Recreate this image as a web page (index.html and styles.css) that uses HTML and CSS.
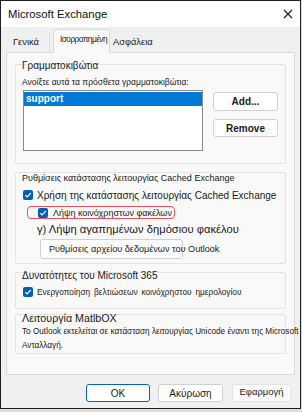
FILE: index.html
```html
<!DOCTYPE html>
<html lang="el">
<head>
<meta charset="utf-8">
<title>Microsoft Exchange</title>
<link rel="stylesheet" href="styles.css">
</head>
<body>
<div class="window">
  <div class="titlebar">
    <span class="title">Microsoft Exchange</span>
    <svg class="close" viewBox="0 0 10 10" width="10" height="10"><path d="M1 1 L9 9 M9 1 L1 9" stroke="#1a1a1a" stroke-width="1.1" fill="none"/></svg>
  </div>
  <div class="body">
    <div class="tabs">
      <div class="tab t1">Γενικά</div>
      <div class="tab active">Ισορροπημένη</div>
      <div class="tab t3">Ασφάλεια</div>
    </div>
    <div class="panel">
      <div class="group g1">
        <div class="legend">Γραμματοκιβώτια</div>
        <div class="hint">Ανοίξτε αυτά τα πρόσθετα γραμματοκιβώτια:</div>
        <div class="mailbox-row">
          <div class="listbox"><div class="item selected">support</div></div>
          <div class="side-buttons">
            <button class="btn add">Add...</button>
            <button class="btn remove">Remove</button>
          </div>
        </div>
      </div>
      <div class="group g2">
        <div class="legend">Ρυθμίσεις κατάστασης λειτουργίας Cached Exchange</div>
        <div class="check-row first">
          <svg class="cb" viewBox="0 0 10 10"><rect x="0" y="0" width="10" height="10" rx="2" fill="#005fb8"/><path d="M2.3 5.2 L4.2 7 L7.8 3" stroke="#fff" stroke-width="1.2" fill="none"/></svg>
          <span>Χρήση της κατάστασης λειτουργίας Cached Exchange</span>
        </div>
        <div class="highlight">
          <svg class="cb" viewBox="0 0 10 10"><rect x="0" y="0" width="10" height="10" rx="2" fill="#005fb8"/><path d="M2.3 5.2 L4.2 7 L7.8 3" stroke="#fff" stroke-width="1.2" fill="none"/></svg>
          <span>Λήψη κοινόχρηστων φακέλων</span>
        </div>
        <div class="big-line">γ) Λήψη αγαπημένων δημόσιου φακέλου</div>
        <button class="btn datafile">Ρυθμίσεις αρχείου δεδομένων του Outlook</button>
      </div>
      <div class="group g3">
        <div class="legend">Δυνατότητες του Microsoft 365</div>
        <div class="check-row">
          <svg class="cb" viewBox="0 0 10 10"><rect x="0" y="0" width="10" height="10" rx="2" fill="#005fb8"/><path d="M2.3 5.2 L4.2 7 L7.8 3" stroke="#fff" stroke-width="1.2" fill="none"/></svg>
          <span class="small">Ενεργοποίηση βελτιώσεων κοινόχρηστου ημερολογίου</span>
        </div>
      </div>
      <div class="group g4">
        <div class="legend">Λειτουργία MatlbOX</div>
        <div class="para">Το Outlook εκτελείται σε κατάσταση λειτουργίας Unicode έναντι της Microsoft<br>Ανταλλαγή.</div>
      </div>
    </div>
    <div class="footer">
      <button class="btn ok">OK</button>
      <button class="btn cancel">Ακύρωση</button>
      <button class="btn apply">Εφαρμογή</button>
    </div>
  </div>
</div>
</body>
</html>
```
FILE: styles.css
```css
* { box-sizing: border-box; margin: 0; padding: 0; }
html, body { background: #dcdcdc; }
body { margin: 0; font-family: "Liberation Sans", Arial, sans-serif; font-size: 10px; color: #1a1a1a; }

.window { width: 301px; height: 409px; border: 1px solid #202020; background: #f0f0f0; display: flex; flex-direction: column; overflow: hidden; }

.titlebar { height: 26px; flex: none; background: #ffffff; display: flex; align-items: center; justify-content: space-between; padding: 0 7px 0 7px; }
.title { font-size: 11.3px; color: #111; }
.close { width: 10px; height: 10px; }

.body { flex: 1; display: flex; flex-direction: column; padding: 3px 5px 6px 5px; }

.tabs { display: flex; align-items: flex-end; height: 23px; padding-left: 2px; margin-bottom: -1px; position: relative; z-index: 1; }
.tab { height: 20px; line-height: 19px; padding-left: 5px; font-size: 9.3px; color: #1a1a1a; white-space: nowrap; }
.t1 { width: 42px; border-right: 1px solid #e2e2e2; }
.tab.active { width: 57px; height: 24px; margin-left: 3px; line-height: 19px; padding-left: 6px; font-size: 8.3px; letter-spacing: -0.55px; background: #f9f9f9; border: 1px solid #d9d9d9; border-bottom: none; border-radius: 3px 3px 0 0; }
.t3 { width: 44px; padding-left: 3px; }

.panel { flex: 1; background: #f9f9f9; border: 1px solid #dadada; padding: 11px 8px 0 8px; display: flex; flex-direction: column; }

.group { border: 1px solid #e3e3e3; border-radius: 2px; padding: 0 7px 0 6px; }
.legend { line-height: 12px; margin-top: -3px; white-space: nowrap; }
.g1 { padding-bottom: 12px; }
.g1 .legend { margin-top: -5px; }
.g2 { margin-top: 8px; padding-bottom: 4px; }
.g2 .legend { margin-top: -1px; font-size: 9px; }
.g3 { margin-top: 8px; padding-bottom: 10px; }
.g3 .legend { font-size: 10px; }
.g4 { margin-top: 5px; }
.g4 .legend { font-size: 10.7px; }

.hint { line-height: 12px; margin-top: 4px; font-size: 8.5px; white-space: nowrap; }
.mailbox-row { display: flex; gap: 10px; margin-top: 2px; margin-left: 1px; }
.listbox { width: 180px; height: 61px; background: #ffffff; border: 1px solid #8a8a8a; padding: 1px 0 0 0; }
.item { height: 14px; line-height: 14px; padding-left: 2px; font-weight: bold; font-size: 10px; }
.item.selected { background: #0078d7; color: #ffffff; }
.side-buttons { width: 65px; display: flex; flex-direction: column; margin-top: 2px; }

.btn { font-family: inherit; font-size: 10px; color: #1a1a1a; background: #ffffff; border: 1px solid #d0d0d0; border-radius: 3px; cursor: default; }
.add { height: 19px; font-weight: bold; }
.remove { height: 18px; margin-top: 8px; font-weight: bold; }

.check-row { display: flex; align-items: center; gap: 4px; height: 12px; margin-top: 4px; margin-left: 1px; white-space: nowrap; }
.check-row.first { margin-top: 5px; }
.cb { width: 10px; height: 10px; flex: none; }

.highlight { display: flex; align-items: center; gap: 5px; width: 148px; height: 13px; margin-top: 5px; margin-left: 5px; padding-left: 10px; border: 1px solid #e8505b; border-radius: 4px; white-space: nowrap; font-size: 9px; }

.big-line { font-size: 11.2px; line-height: 16px; margin-top: 2px; margin-left: 15px; white-space: nowrap; }

.datafile { display: block; width: 143px; height: 20px; margin-top: 2px; margin-left: 18px; padding-left: 8px; font-size: 9.1px; text-align: left; white-space: nowrap; overflow: visible; background: #fdfdfd; }

.small { font-size: 8.3px; word-spacing: 1.5px; }

.para { line-height: 14px; margin-top: 1px; font-size: 8.2px; white-space: nowrap; }

.footer { display: flex; justify-content: flex-end; margin-top: 9px; padding-right: 4px; }
.footer .btn { height: 18px; }
.ok { width: 64px; border: 1px solid #0067c0; }
.cancel { width: 65px; margin-left: 8px; }
.apply { width: 59px; margin-left: 9px; background: #fbfbfb; border-color: #e3e3e3; font-size: 9.5px; padding-bottom: 4px; }
```
